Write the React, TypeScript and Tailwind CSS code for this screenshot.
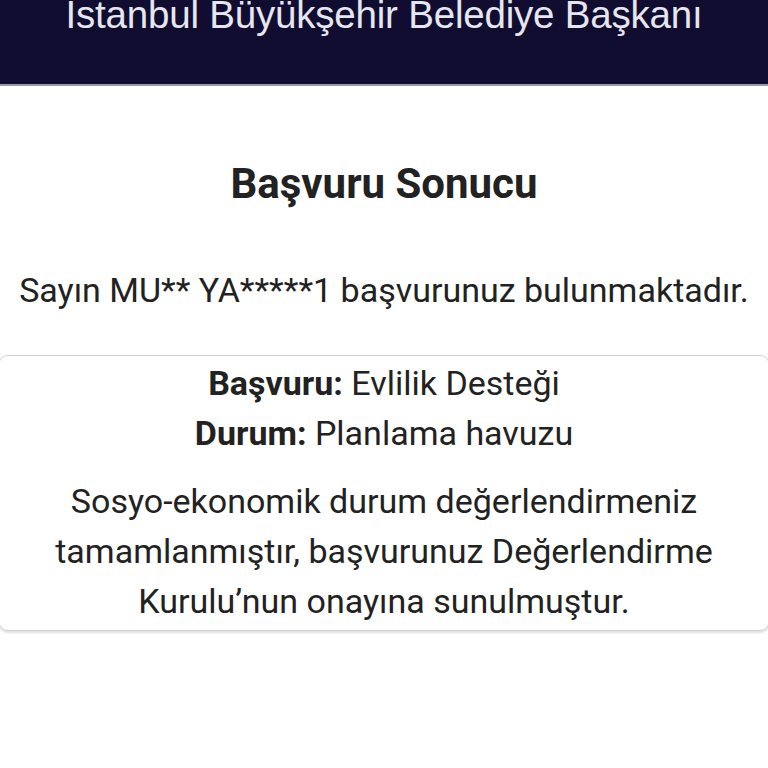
export default function App() {
  return (
    <div className="w-[768px] h-[768px] bg-white overflow-hidden" style={{ fontFamily: 'Roboto, "Noto Sans", sans-serif' }}>
      {/* header band, cut off at top */}
      <div className="flex flex-col h-[86px] bg-[#100d30] border-b-2 border-[#9a98b0] overflow-hidden">
        <div
          className="-mt-[4px] text-center text-[38.5px] leading-[38px] text-[#e6e6ef] tracking-[-0.2px]"
          style={{ fontFamily: '"Liberation Sans", Arial, sans-serif' }}
        >
          Istanbul Büyükşehir Belediye Başkanı
        </div>
      </div>

      <div className="pt-[76px] text-[#222]">
        <h1 className="text-center font-bold text-[42px] leading-[44px]">Başvuru Sonucu</h1>
        <p className="mt-[64px] text-center text-[34px] leading-[40px]">
          Sayın MU** YA*****1 başvurunuz bulunmaktadır.
        </p>

        <div className="mt-[45px] mx-[-2px] rounded-[10px] border border-[#cfcfcf] shadow-[0_2px_2px_rgba(0,0,0,0.12)] pt-[2px] pb-[4px] text-center text-[34px]">
          <div className="leading-[50px]">
            <span className="font-bold">Başvuru:</span> Evlilik Desteği
          </div>
          <div className="leading-[50px]">
            <span className="font-bold">Durum:</span> Planlama havuzu
          </div>
          <p className="mt-[18px] leading-[50px] px-[40px]">
            Sosyo-ekonomik durum değerlendirmeniz tamamlanmıştır, başvurunuz Değerlendirme Kurulu’nun onayına sunulmuştur.
          </p>
        </div>
      </div>
    </div>
  );
}
